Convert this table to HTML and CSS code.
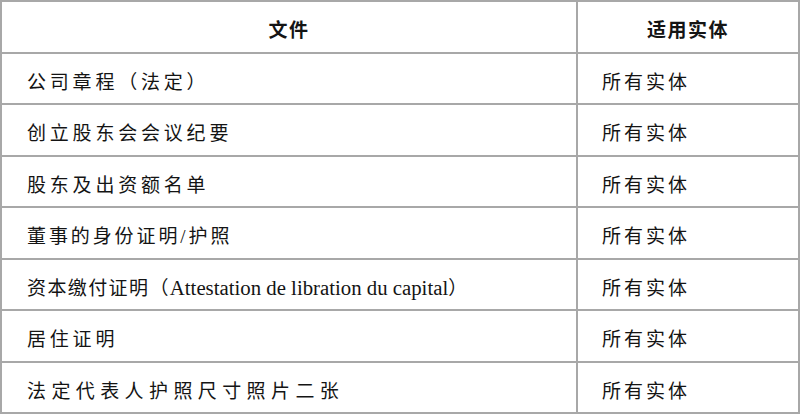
FILE: index.html
```html
<!DOCTYPE html>
<html lang="zh-CN">
<head>
<meta charset="utf-8">
<title>文件</title>
<link rel="stylesheet" href="styles.css">
</head>
<body>
<table class="docs">
  <thead>
    <tr>
      <th class="col-doc">文件</th>
      <th class="col-ent">适用实体</th>
    </tr>
  </thead>
  <tbody>
    <tr><td class="doc">公司章程（法定）</td><td class="ent">所有实体</td></tr>
    <tr class="tall"><td class="doc">创立股东会会议纪要</td><td class="ent">所有实体</td></tr>
    <tr><td class="doc">股东及出资额名单</td><td class="ent">所有实体</td></tr>
    <tr class="tall"><td class="doc doc-mid">董事的身份证明/护照</td><td class="ent">所有实体</td></tr>
    <tr><td class="doc doc-tight">资本缴付证明（<span class="latin">Attestation de libration du capital</span>）</td><td class="ent">所有实体</td></tr>
    <tr class="tall"><td class="doc">居住证明</td><td class="ent">所有实体</td></tr>
    <tr><td class="doc doc-wide">法定代表人护照尺寸照片二张</td><td class="ent">所有实体</td></tr>
  </tbody>
</table>
</body>
</html>
```

FILE: styles.css
```css
html, body {
  margin: 0;
  padding: 0;
  background: #ffffff;
}

.docs {
  width: 800px;
  border-collapse: collapse;
  table-layout: fixed;
  font-family: "Liberation Serif", "Noto Sans CJK SC", serif;
  color: #141414;
}

.docs th,
.docs td {
  border: 2px solid #a8a8a8;
  padding: 0;
  vertical-align: middle;
}

.docs tr {
  height: 51px;
}

.docs tr.tall {
  height: 52px;
}

.docs thead tr {
  height: 52px;
}

.col-doc {
  width: 574px;
}

.docs th {
  font-size: 19px;
  font-weight: 700;
  letter-spacing: 1.5px;
  text-align: center;
  padding-top: 2px;
}

.docs td {
  font-size: 19px;
  font-weight: 400;
  padding-top: 3px;
}

.doc {
  padding-left: 25px !important;
  letter-spacing: 3.8px;
}

.doc-mid {
  letter-spacing: 2.9px;
}

.doc-tight {
  letter-spacing: 1.4px;
}

.doc-wide {
  letter-spacing: 5.4px;
}

.latin {
  letter-spacing: 0;
  font-size: 20.8px;
}

.ent {
  padding-left: 24px !important;
  letter-spacing: 3px;
}
```
